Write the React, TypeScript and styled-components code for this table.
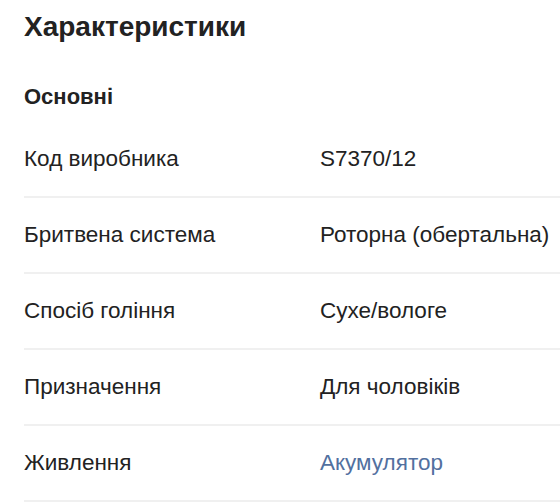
import styled, { createGlobalStyle } from "styled-components";

const GlobalStyle = createGlobalStyle`
    body {
        margin: 0;
        background: #ffffff;
        font-family: "Liberation Sans", Arial, sans-serif;
        color: #222222;
    }
`;

interface ISpec {
    name: string;
    value: string;
    link?: boolean;
}

const specs: ISpec[] = [
    { name: "Код виробника", value: "S7370/12" },
    { name: "Бритвена система", value: "Роторна (обертальна)" },
    { name: "Спосіб гоління", value: "Сухе/вологе" },
    { name: "Призначення", value: "Для чоловіків" },
    { name: "Живлення", value: "Акумулятор", link: true },
];

export default function App() {
    return (
        <>
            <GlobalStyle />
            <Section>
                <Title>Характеристики</Title>
                <GroupTitle>Основні</GroupTitle>
                <List>
                    {specs.map((s) => (
                        <Row key={s.name}>
                            <Name>{s.name}</Name>
                            <Value $link={s.link}>{s.value}</Value>
                        </Row>
                    ))}
                </List>
            </Section>
        </>
    );
}

const Section = styled.section`
    padding-left: 24px;
    overflow: hidden;
`;

const Title = styled.h2`
    margin: 0;
    font-size: 28px;
    line-height: 54px;
    font-weight: 700;
    color: #222222;
`;

const GroupTitle = styled.h3`
    margin: 18px 0 0;
    font-size: 22px;
    line-height: 50px;
    font-weight: 700;
    color: #222222;
`;

const List = styled.dl`
    margin: 0;
`;

const Row = styled.div`
    display: grid;
    grid-template-columns: 296px 1fr;
    align-items: center;
    height: 74px;
    border-bottom: 2px solid #f0f0f0;
`;

const Name = styled.dt`
    font-size: 22.5px;
    white-space: nowrap;
`;

const Value = styled.dd<{ $link?: boolean }>`
    margin: 0;
    font-size: 22.5px;
    white-space: nowrap;
    color: ${(p) => (p.$link ? "#52709f" : "#222222")};
`;
